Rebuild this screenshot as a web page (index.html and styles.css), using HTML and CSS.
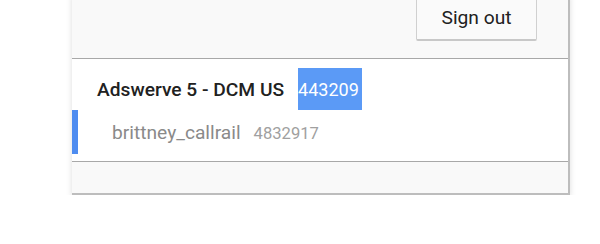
FILE: index.html
```html
<!DOCTYPE html>
<html>
<head>
<meta charset="utf-8">
<link rel="stylesheet" href="styles.css">
</head>
<body>
<div class="panel">
  <div class="toolbar">
    <button class="signout">Sign out</button>
  </div>
  <div class="list">
    <div class="row row-parent">
      <span class="name-bold">Adswerve 5 - DCM US</span><span class="id-hl">443209</span>
    </div>
    <div class="row row-child selected">
      <span class="name-sub">brittney_callrail</span><span class="id-sub">4832917</span>
    </div>
  </div>
  <div class="footer"></div>
</div>
</body>
</html>
```

FILE: styles.css
```css
html, body {
  margin: 0;
  padding: 0;
  background: #ffffff;
  font-family: Roboto, "Liberation Sans", Arial, sans-serif;
}

.panel {
  margin-left: 72px;
  margin-top: -6px;
  width: 496px;
  background: #f9f9f9;
  border-right: 2px solid #bdbdbd;
  border-bottom: 2px solid #bdbdbd;
  box-shadow: 0 2px 6px rgba(0, 0, 0, 0.14);
}

.toolbar {
  display: flex;
  justify-content: flex-end;
  padding: 0 31px 17px 0;
}

.signout {
  width: 121px;
  height: 47px;
  background: #fafafa;
  border: 1px solid #d0d0d0;
  border-bottom: 2px solid #c8c8c8;
  border-radius: 2px;
  font-family: Roboto, "Liberation Sans", Arial, sans-serif;
  font-size: 19.2px;
  color: #212121;
  padding: 0;
}

.list {
  background: #ffffff;
  border-top: 1px solid #a8a8a8;
  border-bottom: 1px solid #a8a8a8;
  padding: 9px 0 7px 0;
}

.row {
  display: flex;
  align-items: center;
}

.row-parent {
  height: 42px;
  padding-left: 25px;
}

.name-bold {
  font-weight: 500;
  font-size: 19.2px;
  color: #212121;
  margin-right: 14px;
}

.id-hl {
  display: flex;
  align-items: center;
  height: 42px;
  width: 64px;
  background: #5b9af6;
  color: #ffffff;
  font-size: 18px;
}

.row-child {
  height: 44px;
  padding-left: 34px;
  border-left: 6px solid #4e8cf0;
}

.name-sub {
  font-size: 19.2px;
  color: #8a8a8a;
  margin-right: 13px;
}

.id-sub {
  font-size: 16.6px;
  color: #a0a0a0;
  padding-top: 2px;
}

.footer {
  height: 31px;
}
```
